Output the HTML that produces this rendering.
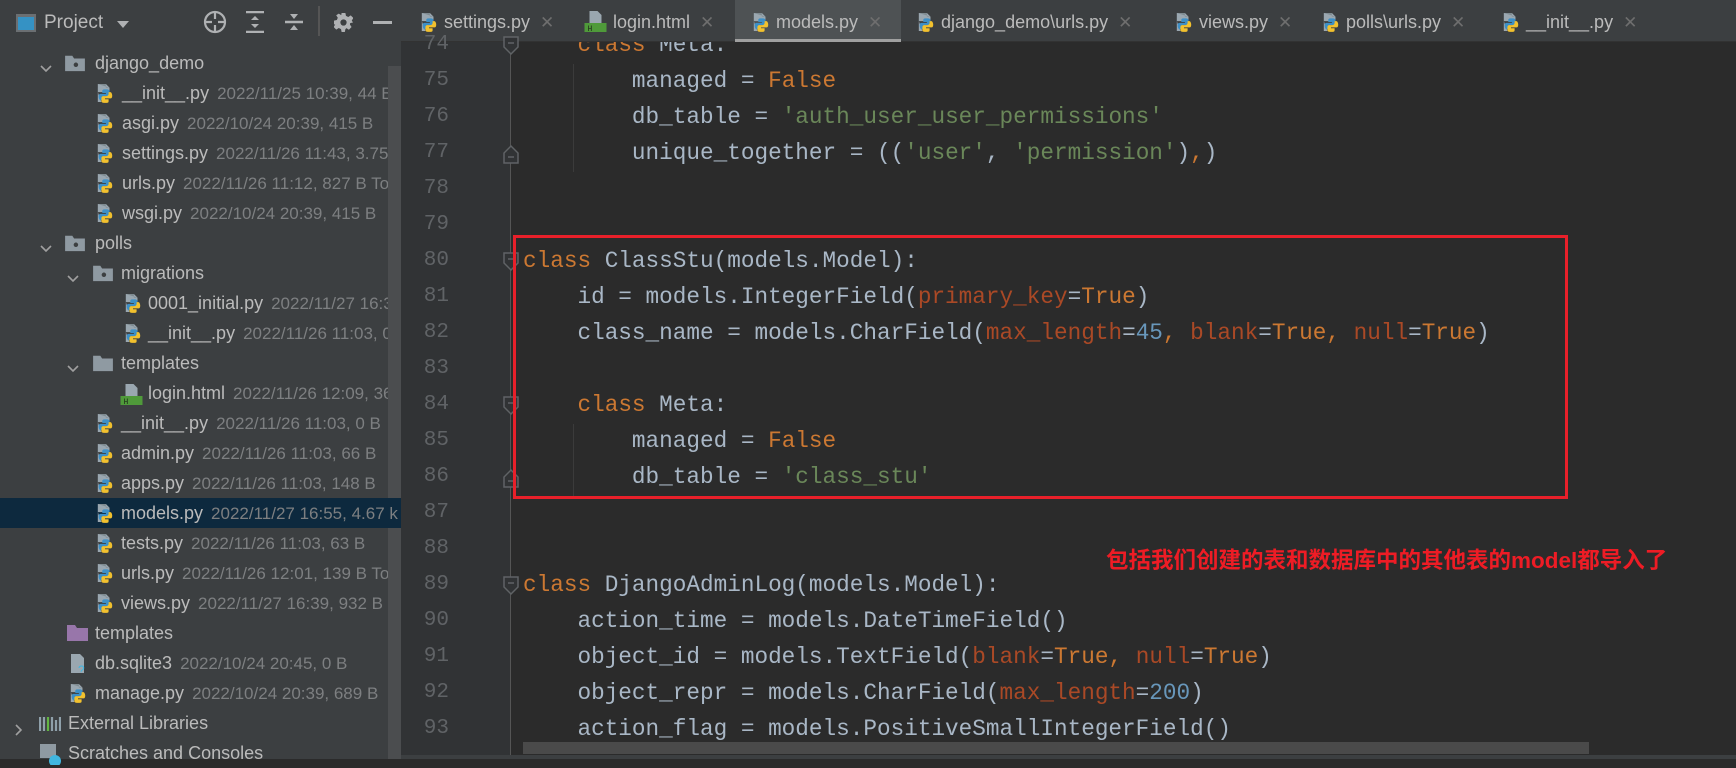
<!DOCTYPE html>
<html><head><meta charset="utf-8"><style>
*{margin:0;padding:0;box-sizing:border-box}
body{width:1736px;height:759px;overflow:hidden;background:#2b2b2b;position:relative;font-family:"Liberation Sans","Noto Sans CJK SC",sans-serif}
.abs{position:absolute}
#side{left:0;top:0;width:401px;height:759px;background:#3c3f41}
.row{position:absolute;left:0;width:388px;height:30px;line-height:30px;font-size:18px;color:#bbbbbb;white-space:nowrap;overflow:hidden}
.row .m{color:#7d7f81;font-size:17px;margin-left:8px}
.chev{position:absolute;top:0;width:16px;height:30px}
.ic{position:absolute;top:5px}
#tabs{left:401px;top:0;width:1335px;height:42px;background:#3c3f41;border-bottom:1px solid #323232}
.tab{position:absolute;top:2px;height:40px;line-height:40px;font-size:18px;color:#bbbbbb;white-space:nowrap}
.tab .x{color:#6e6e6e;margin-left:10px;font-size:17px}
#gut{left:401px;top:42px;width:110px;height:717px;background:#313335}
.ln{position:absolute;left:401px;width:48px;text-align:right;font-family:"Liberation Mono",monospace;font-size:21px;color:#606366;height:36px;line-height:36px}
.cl{position:absolute;left:523px;font-family:"Liberation Mono",monospace;font-size:22.7px;color:#a9b7c6;height:36px;line-height:36px;white-space:pre}
.k{color:#cc7832}.s{color:#6a8759}.a{color:#aa4926}.n{color:#6897bb}
</style></head><body>
<svg width="0" height="0" style="position:absolute"><defs>
<symbol id="py" viewBox="0 0 20 22"><path d="M2 1h9l4 4v5H2z" fill="#9aa7b0"/><path d="M2 1h9v4h4" fill="#7f8b91"/><path d="M2 10v11h4z" fill="#9aa7b0"/><path d="M10 7c-3 0-3 1-3 2v2h4v1H5c-2 0-2 2-2 3.5S4 19 5 19h2v-2c0-1.5 1-2.5 3-2.5h3c1 0 2-1 2-2V9c0-1-1-2-3-2z" fill="#3d8fc6"/><path d="M11 22c3 0 3-1 3-2v-2h-4v-1h6c2 0 2-2 2-3.5S17 10 16 10h-2v2c0 1.5-1 2.5-3 2.5H8c-1 0-2 1-2 2V20c0 1 1 2 3 2z" fill="#f2c12e"/></symbol>
<symbol id="html" viewBox="0 0 22 22"><path d="M5 1h8l4 4v8H5z" fill="#9aa7b0"/><rect x="0" y="13" width="22" height="9" fill="#4f9a3a"/><text x="3" y="21" font-size="8" fill="#1f2a1b" font-family="Liberation Mono">H</text></symbol>
<symbol id="fold" viewBox="0 0 24 20"><path d="M1 2h8l2 3h12v14H1z" fill="#8f9aa2"/><circle cx="13" cy="12" r="2.5" fill="#3c3f41"/></symbol>
<symbol id="foldp" viewBox="0 0 24 20"><path d="M1 2h8l2 3h12v14H1z" fill="#8f9aa2"/></symbol>
<symbol id="chv" viewBox="0 0 16 16"><path d="M3 6l5 5 5-5" stroke="#a0a0a0" stroke-width="1.6" fill="none"/></symbol>
<symbol id="chr" viewBox="0 0 16 16"><path d="M6 3l5 5-5 5" stroke="#a0a0a0" stroke-width="1.6" fill="none"/></symbol>
</defs></svg>

<div id="side" class="abs">
 <svg class="abs" style="left:15px;top:13px" width="22" height="20"><rect x="1" y="1" width="20" height="18" fill="#6b6f72"/><rect x="3" y="4" width="16" height="13" fill="#3592c4"/></svg>
 <div class="abs" style="left:44px;top:12px;font-size:19px;color:#bbbbbb">Project</div>
 <svg class="abs" style="left:116px;top:19px" width="14" height="10"><path d="M1 2h12L7 9z" fill="#afb1b3"/></svg>
 <svg class="abs" style="left:203px;top:10px" width="24" height="24"><circle cx="12" cy="12" r="10" stroke="#afb1b3" stroke-width="2.2" fill="none"/><path d="M12 2v7M12 15v7M2 12h7M15 12h7" stroke="#afb1b3" stroke-width="2.2"/></svg>
 <svg class="abs" style="left:245px;top:11px" width="20" height="22"><path d="M1 1h18M1 21h18" stroke="#afb1b3" stroke-width="2.5"/><path d="M6 9l4-4 4 4zM6 13l4 4 4-4z" fill="#afb1b3"/></svg>
 <svg class="abs" style="left:284px;top:11px" width="20" height="22"><path d="M1 11h18" stroke="#afb1b3" stroke-width="2.5"/><path d="M6 3l4 5 4-5zM6 19l4-5 4 5z" fill="#afb1b3"/></svg>
 <div class="abs" style="left:318px;top:6px;width:2px;height:30px;background:#555"></div>
 <svg class="abs" style="left:334px;top:13px" width="19" height="19" viewBox="0 0 20 20"><path d="M8 0h4l.6 3 2.4 1.2 2.6-1.7 2.8 2.8-1.7 2.6L20 10v0l-3 .6-.2 1.6 1.7 2.6-2.8 2.8-2.6-1.7L12 17l-.6 3H8l-.6-3-2.4-1.2-2.6 1.7-2.8-2.8 1.7-2.6L0 12V8l3-.6 1-2.4-1.7-2.6L5 0.6l2.6 1.7z" fill="#afb1b3"/><circle cx="10" cy="10" r="3.3" fill="#3c3f41"/></svg>
 <div class="abs" style="left:373px;top:21px;width:19px;height:3px;background:#afb1b3"></div>
 <div class="abs" style="left:388px;top:66px;width:13px;height:693px;background:#4b4d4f"></div>
 <div class="abs" style="left:0;top:498px;width:401px;height:30px;background:#0d293e"></div>

 <div class="row" style="top:48px"><svg class="chev" style="left:38px;top:5px" width="16" height="16"><use href="#chv"/></svg><svg class="ic" style="left:64px;top:6px" width="22" height="18"><use href="#fold"/></svg><span style="position:absolute;left:95px">django_demo</span></div>
 <div class="row" style="top:78px"><svg class="ic" style="left:96px" width="18" height="20"><use href="#py"/></svg><span style="position:absolute;left:122px">__init__.py<span class="m">2022/11/25 10:39, 44 B T</span></span></div>
 <div class="row" style="top:108px"><svg class="ic" style="left:96px" width="18" height="20"><use href="#py"/></svg><span style="position:absolute;left:122px">asgi.py<span class="m">2022/10/24 20:39, 415 B</span></span></div>
 <div class="row" style="top:138px"><svg class="ic" style="left:96px" width="18" height="20"><use href="#py"/></svg><span style="position:absolute;left:122px">settings.py<span class="m">2022/11/26 11:43, 3.75</span></span></div>
 <div class="row" style="top:168px"><svg class="ic" style="left:96px" width="18" height="20"><use href="#py"/></svg><span style="position:absolute;left:122px">urls.py<span class="m">2022/11/26 11:12, 827 B Too</span></span></div>
 <div class="row" style="top:198px"><svg class="ic" style="left:96px" width="18" height="20"><use href="#py"/></svg><span style="position:absolute;left:122px">wsgi.py<span class="m">2022/10/24 20:39, 415 B</span></span></div>
 <div class="row" style="top:228px"><svg class="chev" style="left:38px;top:5px" width="16" height="16"><use href="#chv"/></svg><svg class="ic" style="left:64px;top:6px" width="22" height="18"><use href="#fold"/></svg><span style="position:absolute;left:95px">polls</span></div>
 <div class="row" style="top:258px"><svg class="chev" style="left:65px;top:5px" width="16" height="16"><use href="#chv"/></svg><svg class="ic" style="left:92px;top:6px" width="22" height="18"><use href="#fold"/></svg><span style="position:absolute;left:121px">migrations</span></div>
 <div class="row" style="top:288px"><svg class="ic" style="left:124px" width="18" height="20"><use href="#py"/></svg><span style="position:absolute;left:148px">0001_initial.py<span class="m">2022/11/27 16:3</span></span></div>
 <div class="row" style="top:318px"><svg class="ic" style="left:124px" width="18" height="20"><use href="#py"/></svg><span style="position:absolute;left:148px">__init__.py<span class="m">2022/11/26 11:03, 0 B</span></span></div>
 <div class="row" style="top:348px"><svg class="chev" style="left:65px;top:5px" width="16" height="16"><use href="#chv"/></svg><svg class="ic" style="left:92px;top:6px" width="22" height="18"><use href="#foldp"/></svg><span style="position:absolute;left:121px">templates</span></div>
 <div class="row" style="top:378px"><svg class="ic" style="left:120px" width="23" height="22"><use href="#html"/></svg><span style="position:absolute;left:148px">login.html<span class="m">2022/11/26 12:09, 36</span></span></div>
 <div class="row" style="top:408px"><svg class="ic" style="left:96px" width="18" height="20"><use href="#py"/></svg><span style="position:absolute;left:121px">__init__.py<span class="m">2022/11/26 11:03, 0 B</span></span></div>
 <div class="row" style="top:438px"><svg class="ic" style="left:96px" width="18" height="20"><use href="#py"/></svg><span style="position:absolute;left:121px">admin.py<span class="m">2022/11/26 11:03, 66 B</span></span></div>
 <div class="row" style="top:468px"><svg class="ic" style="left:96px" width="18" height="20"><use href="#py"/></svg><span style="position:absolute;left:121px">apps.py<span class="m">2022/11/26 11:03, 148 B</span></span></div>
 <div class="row" style="top:498px;width:401px"><svg class="ic" style="left:96px" width="18" height="20"><use href="#py"/></svg><span style="position:absolute;left:121px">models.py<span class="m">2022/11/27 16:55, 4.67 k</span></span></div>
 <div class="row" style="top:528px"><svg class="ic" style="left:96px" width="18" height="20"><use href="#py"/></svg><span style="position:absolute;left:121px">tests.py<span class="m">2022/11/26 11:03, 63 B</span></span></div>
 <div class="row" style="top:558px"><svg class="ic" style="left:96px" width="18" height="20"><use href="#py"/></svg><span style="position:absolute;left:121px">urls.py<span class="m">2022/11/26 12:01, 139 B Too</span></span></div>
 <div class="row" style="top:588px"><svg class="ic" style="left:96px" width="18" height="20"><use href="#py"/></svg><span style="position:absolute;left:121px">views.py<span class="m">2022/11/27 16:39, 932 B M</span></span></div>
 <div class="row" style="top:618px"><svg class="ic" style="left:66px;top:6px" width="22" height="18"><path d="M1 1h8l2 3h11v13H1z" fill="#9876aa"/></svg><span style="position:absolute;left:95px">templates</span></div>
 <div class="row" style="top:648px"><svg class="ic" style="left:69px" width="18" height="20"><path d="M2 1h9l4 4v16H2z" fill="#9aa7b0"/><text x="9" y="21" font-size="12" fill="#40b6e0" font-family="Liberation Sans">?</text></svg><span style="position:absolute;left:95px">db.sqlite3<span class="m">2022/10/24 20:45, 0 B</span></span></div>
 <div class="row" style="top:678px"><svg class="ic" style="left:69px" width="18" height="20"><use href="#py"/></svg><span style="position:absolute;left:95px">manage.py<span class="m">2022/10/24 20:39, 689 B</span></span></div>
 <div class="row" style="top:708px"><svg class="chev" style="left:10px;top:7px" width="16" height="16"><use href="#chr"/></svg><svg class="ic" style="left:39px;top:7px" width="22" height="16"><path d="M1 2v14M5 2v14M13 2v14M17 5v11M21 2v14" stroke="#8fa0aa" stroke-width="2.2"/><path d="M9 2v14" stroke="#62b543" stroke-width="2.2"/></svg><span style="position:absolute;left:68px">External Libraries</span></div>
 <div class="row" style="top:738px"><svg class="ic" style="left:39px" width="22" height="22"><rect x="1" y="1" width="16" height="14" fill="#8f9aa2"/><circle cx="16" cy="18" r="6" fill="#40b6e0"/></svg><span style="position:absolute;left:68px">Scratches and Consoles</span></div>
</div>

<div id="tabs" class="abs"></div>
<div class="abs" style="left:735px;top:0;width:166px;height:42px;background:#4e5254"></div>
<div class="abs" style="left:735px;top:39px;width:166px;height:3px;background:#a0a0a0"></div>
<div class="tab" style="left:420px"><svg style="vertical-align:-4px;margin-right:6px" width="18" height="20"><use href="#py"/></svg>settings.py<span class="x">✕</span></div>
<div class="tab" style="left:584px"><svg style="vertical-align:-4px;margin-right:6px" width="23" height="22"><use href="#html"/></svg>login.html<span class="x">✕</span></div>
<div class="tab" style="left:752px"><svg style="vertical-align:-4px;margin-right:6px" width="18" height="20"><use href="#py"/></svg>models.py<span class="x">✕</span></div>
<div class="tab" style="left:917px"><svg style="vertical-align:-4px;margin-right:6px" width="18" height="20"><use href="#py"/></svg>django_demo\urls.py<span class="x">✕</span></div>
<div class="tab" style="left:1175px"><svg style="vertical-align:-4px;margin-right:6px" width="18" height="20"><use href="#py"/></svg>views.py<span class="x">✕</span></div>
<div class="tab" style="left:1322px"><svg style="vertical-align:-4px;margin-right:6px" width="18" height="20"><use href="#py"/></svg>polls\urls.py<span class="x">✕</span></div>
<div class="tab" style="left:1502px"><svg style="vertical-align:-4px;margin-right:6px" width="18" height="20"><use href="#py"/></svg>__init__.py<span class="x">✕</span></div>

<div id="gut" class="abs"></div>
<div class="abs" style="left:510px;top:42px;width:1px;height:717px;background:#555"></div>
<div class="abs" style="left:573px;top:64px;width:1px;height:108px;background:#3b3b3b"></div>
<div class="abs" style="left:573px;top:424px;width:1px;height:72px;background:#3b3b3b"></div>

<div class="ln" style="top:27px">74</div><div class="ln" style="top:63px">75</div><div class="ln" style="top:99px">76</div><div class="ln" style="top:135px">77</div><div class="ln" style="top:171px">78</div><div class="ln" style="top:207px">79</div><div class="ln" style="top:243px">80</div><div class="ln" style="top:279px">81</div><div class="ln" style="top:315px">82</div><div class="ln" style="top:351px">83</div><div class="ln" style="top:387px">84</div><div class="ln" style="top:423px">85</div><div class="ln" style="top:459px">86</div><div class="ln" style="top:495px">87</div><div class="ln" style="top:531px">88</div><div class="ln" style="top:567px">89</div><div class="ln" style="top:603px">90</div><div class="ln" style="top:639px">91</div><div class="ln" style="top:675px">92</div><div class="ln" style="top:711px">93</div>

<div class="abs" style="left:401px;top:42px;width:1335px;height:717px;overflow:hidden;pointer-events:none">
<div class="cl" style="left:122px;top:-15px">    <span class="k">class</span> Meta:</div>
</div>
<div class="cl" style="top:63px">        managed = <span class="k">False</span></div>
<div class="cl" style="top:99px">        db_table = <span class="s">'auth_user_user_permissions'</span></div>
<div class="cl" style="top:135px">        unique_together = ((<span class="s">'user'</span>, <span class="s">'permission'</span>)<span class="k">,</span>)</div>
<div class="cl" style="top:243px"><span class="k">class</span> ClassStu(models.Model):</div>
<div class="cl" style="top:279px">    id = models.IntegerField(<span class="a">primary_key</span>=<span class="k">True</span>)</div>
<div class="cl" style="top:315px">    class_name = models.CharField(<span class="a">max_length</span>=<span class="n">45</span><span class="k">,</span> <span class="a">blank</span>=<span class="k">True</span><span class="k">,</span> <span class="a">null</span>=<span class="k">True</span>)</div>
<div class="cl" style="top:387px">    <span class="k">class</span> Meta:</div>
<div class="cl" style="top:423px">        managed = <span class="k">False</span></div>
<div class="cl" style="top:459px">        db_table = <span class="s">'class_stu'</span></div>
<div class="cl" style="top:567px"><span class="k">class</span> DjangoAdminLog(models.Model):</div>
<div class="cl" style="top:603px">    action_time = models.DateTimeField()</div>
<div class="cl" style="top:639px">    object_id = models.TextField(<span class="a">blank</span>=<span class="k">True</span><span class="k">,</span> <span class="a">null</span>=<span class="k">True</span>)</div>
<div class="cl" style="top:675px">    object_repr = models.CharField(<span class="a">max_length</span>=<span class="n">200</span>)</div>
<div class="cl" style="top:711px">    action_flag = models.PositiveSmallIntegerField()</div>

<svg class="abs" style="left:503px;top:36px" width="16" height="20"><path d="M1 1h14v10l-7 7-7-7z" fill="#313335" stroke="#606366" stroke-width="1.5"/><path d="M5 7h6" stroke="#606366" stroke-width="1.5"/></svg>
<svg class="abs" style="left:503px;top:144px" width="16" height="20"><path d="M1 19h14V9L8 2 1 9z" fill="#313335" stroke="#606366" stroke-width="1.5"/><path d="M5 13h6" stroke="#606366" stroke-width="1.5"/></svg>
<svg class="abs" style="left:503px;top:252px" width="16" height="20"><path d="M1 1h14v10l-7 7-7-7z" fill="#313335" stroke="#606366" stroke-width="1.5"/><path d="M5 7h6" stroke="#606366" stroke-width="1.5"/></svg>
<svg class="abs" style="left:503px;top:396px" width="16" height="20"><path d="M1 1h14v10l-7 7-7-7z" fill="#313335" stroke="#606366" stroke-width="1.5"/><path d="M5 7h6" stroke="#606366" stroke-width="1.5"/></svg>
<svg class="abs" style="left:503px;top:468px" width="16" height="20"><path d="M1 19h14V9L8 2 1 9z" fill="#313335" stroke="#606366" stroke-width="1.5"/><path d="M5 13h6" stroke="#606366" stroke-width="1.5"/></svg>
<svg class="abs" style="left:503px;top:576px" width="16" height="20"><path d="M1 1h14v10l-7 7-7-7z" fill="#313335" stroke="#606366" stroke-width="1.5"/><path d="M5 7h6" stroke="#606366" stroke-width="1.5"/></svg>

<div class="abs" style="left:513px;top:235px;width:1055px;height:264px;border:3px solid #e8202a"></div>
<div class="abs" style="left:1106px;top:543px;font-size:22.5px;font-weight:bold;color:#ee1c25;font-family:'Liberation Sans','Noto Sans CJK SC',sans-serif;white-space:nowrap">包括我们创建的表和数据库中的其他表的model都导入了</div>

<div class="abs" style="left:523px;top:742px;width:1066px;height:12px;background:#4a4a4a"></div>
<div class="abs" style="left:401px;top:755px;width:1335px;height:4px;background:#3c3f41"></div>
</body></html>
